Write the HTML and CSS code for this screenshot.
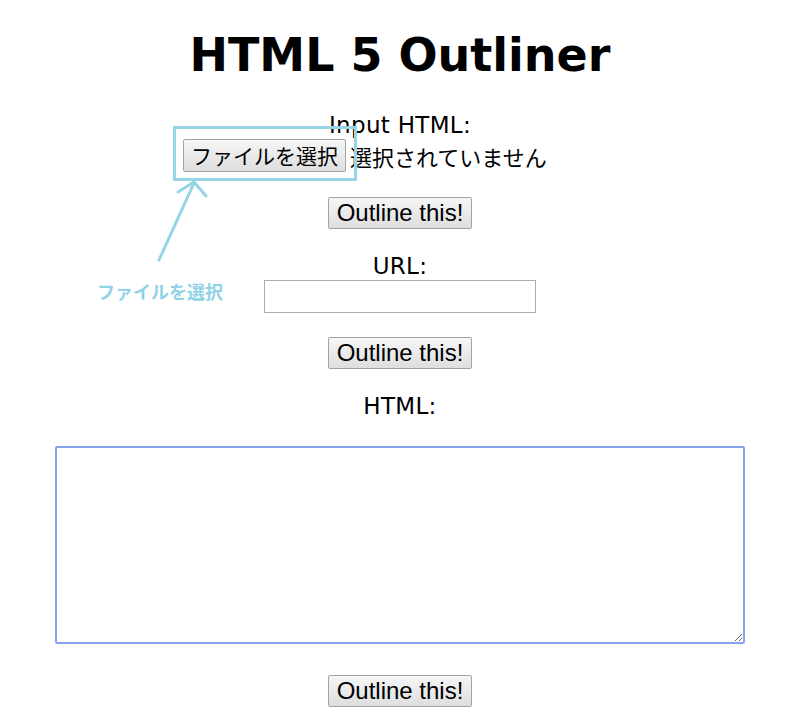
FILE: index.html
```html
<!DOCTYPE html>
<html lang="ja">
<head>
<meta charset="utf-8">
<title>HTML 5 Outliner</title>
<link rel="stylesheet" href="styles.css">
</head>
<body>
<h1 class="title">HTML 5 Outliner</h1>
<form class="form">
  <div class="label label-first">Input HTML:</div>
  <div class="file-row">
    <button type="button" class="btn file-btn">ファイルを選択</button>
    <span class="file-status">選択されていません</span>
  </div>
  <button type="button" class="btn outline-btn btn-1">Outline this!</button>
  <div class="label label-url">URL:</div>
  <input type="text" class="url-input">
  <button type="button" class="btn outline-btn btn-2">Outline this!</button>
  <div class="label label-html">HTML:</div>
  <textarea class="html-area"></textarea>
  <button type="button" class="btn outline-btn btn-3">Outline this!</button>
</form>

<svg class="annotation" width="800" height="722" viewBox="0 0 800 722" aria-hidden="true">
  <rect x="174.5" y="127.5" width="181" height="52" fill="none" stroke="#96d4e7" stroke-width="3"/>
  <path d="M159 260 L194 183" fill="none" stroke="#96d4e7" stroke-width="3" stroke-linecap="round"/>
  <path d="M178 192 L194 182 L206 196" fill="none" stroke="#96d4e7" stroke-width="3" stroke-linecap="round" stroke-linejoin="round"/>
</svg>
<div class="annotation-label">ファイルを選択</div>
</body>
</html>
```

FILE: styles.css
```css
html, body {
  margin: 0;
  padding: 0;
  background: #ffffff;
}

body {
  position: relative;
  width: 800px;
  height: 722px;
  overflow: hidden;
  font-family: "DejaVu Sans", Verdana, "Noto Sans CJK JP", sans-serif;
  font-size: 23px;
  color: #000;
  text-align: center;
}

.title {
  margin: 28px 0 0;
  font-size: 46px;
  line-height: 54px;
  font-weight: bold;
}

.form {
  display: flex;
  flex-direction: column;
  align-items: center;
  margin: 0;
}

.label {
  line-height: 25px;
  height: 25px;
  letter-spacing: 0.3px;
}

.label-first { margin-top: 31px; }
.label-url { margin-top: 25px; }
.label-html { margin-top: 25px; }

.file-row {
  display: flex;
  align-items: center;
  width: 434px;
  height: 33px;
  margin-top: 1px;
}

.btn {
  box-sizing: border-box;
  border: 1px solid #a3a3a3;
  border-radius: 2px;
  background: linear-gradient(#f6f6f6, #dedede);
  color: #000;
  margin: 0;
  cursor: default;
}

.file-btn {
  width: 163px;
  height: 33px;
  padding: 0;
  font-family: "Noto Sans CJK JP", sans-serif;
  font-size: 21px;
  line-height: 29px;
}

.file-status {
  margin-left: 4px;
  font-family: "Noto Sans CJK JP", sans-serif;
  font-size: 22px;
  line-height: 30px;
  white-space: nowrap;
}

.outline-btn {
  width: 144px;
  height: 32px;
  padding: 0;
  font-family: "Liberation Sans", Arial, sans-serif;
  font-size: 24px;
  line-height: 28px;
}

.btn-1 { margin-top: 25px; }
.btn-2 { margin-top: 24px; }
.btn-3 { margin-top: 31px; }

.url-input {
  box-sizing: border-box;
  width: 272px;
  height: 33px;
  margin: 1px 0 0;
  border: 1px solid #a9aea9;
  background: #fff;
}

.html-area {
  box-sizing: border-box;
  display: block;
  width: 690px;
  height: 198px;
  margin: 27px 0 0;
  border: 2px solid #86a4ea;
  border-radius: 2px;
  background: #fff;
  resize: both;
  outline: none;
}

.annotation {
  position: absolute;
  left: 0;
  top: 0;
  pointer-events: none;
}

.annotation-label {
  position: absolute;
  left: 97px;
  top: 281px;
  font-family: "Noto Sans CJK JP", sans-serif;
  font-size: 18px;
  line-height: 20px;
  font-weight: bold;
  color: #90d2e6;
  white-space: nowrap;
}
```
